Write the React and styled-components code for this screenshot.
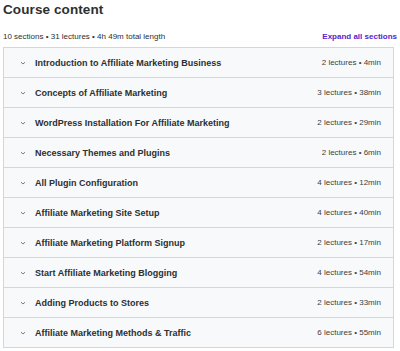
import React from 'react'
import styled, { createGlobalStyle } from 'styled-components'

const sections = [
  { title: 'Introduction to Affiliate Marketing Business', lectures: 2, length: '4min' },
  { title: 'Concepts of Affiliate Marketing', lectures: 3, length: '38min' },
  { title: 'WordPress Installation For Affiliate Marketing', lectures: 2, length: '29min' },
  { title: 'Necessary Themes and Plugins', lectures: 2, length: '6min' },
  { title: 'All Plugin Configuration', lectures: 4, length: '12min' },
  { title: 'Affiliate Marketing Site Setup', lectures: 4, length: '40min' },
  { title: 'Affiliate Marketing Platform Signup', lectures: 2, length: '17min' },
  { title: 'Start Affiliate Marketing Blogging', lectures: 4, length: '54min' },
  { title: 'Adding Products to Stores', lectures: 2, length: '33min' },
  { title: 'Affiliate Marketing Methods & Traffic', lectures: 6, length: '55min' },
]

function App() {
  return (
    <>
      <GlobalStyle />
      <Container>
        <Title>Course content</Title>
        <MetaRow>
          <Meta>10 sections • 31 lectures • 4h 49m total length</Meta>
          <ExpandLink href="#">Expand all sections</ExpandLink>
        </MetaRow>
        <List>
          {sections.map((s, i) => (
            <Row key={i}>
              <Chevron viewBox="0 0 10 10">
                <path d="M3 4.2 L5 6 L7 4.2" />
              </Chevron>
              <RowTitle>{s.title}</RowTitle>
              <RowInfo>{s.lectures} lectures • {s.length}</RowInfo>
            </Row>
          ))}
        </List>
      </Container>
    </>
  )
}

export default App

const GlobalStyle = createGlobalStyle`
  body {
    margin: 0;
    background: #fff;
    font-family: "Liberation Sans", Arial, sans-serif;
    color: #2d2f31;
  }
`

const Container = styled.div`
  width: 400px;
  height: 351px;
  padding: 0 6px 0 3px;
  box-sizing: border-box;
  overflow: hidden;
`

const Title = styled.h2`
  margin: 0;
  padding-top: 1px;
  font-size: 13.5px;
  font-weight: 700;
  letter-spacing: 0.1px;
  line-height: 18px;
`

const MetaRow = styled.div`
  display: flex;
  justify-content: space-between;
  align-items: center;
  margin-top: 12px;
  margin-right: -3px;
  height: 10px;
`

const Meta = styled.span`
  font-size: 8px;
  color: #2d2f31;
`

const ExpandLink = styled.a`
  font-size: 8px;
  font-weight: 700;
  color: #5624d0;
  text-decoration: none;
`

const List = styled.div`
  margin-top: 6px;
  border: 1px solid #d1d7dc;
`

const Row = styled.div`
  display: flex;
  align-items: center;
  height: 29px;
  padding: 0 12px 0 13px;
  background: #f7f9fa;
  border-bottom: 1px solid #d1d7dc;
  &:last-child {
    border-bottom: none;
  }
`

const Chevron = styled.svg`
  width: 10px;
  height: 10px;
  flex-shrink: 0;
  fill: none;
  stroke: #6a6f73;
  stroke-width: 0.9;
  margin-right: 7px;
  margin-left: 1px;
`

const RowTitle = styled.span`
  flex: 1;
  font-size: 9px;
  font-weight: 700;
`

const RowInfo = styled.span`
  font-size: 8px;
  color: #3e4143;
`
